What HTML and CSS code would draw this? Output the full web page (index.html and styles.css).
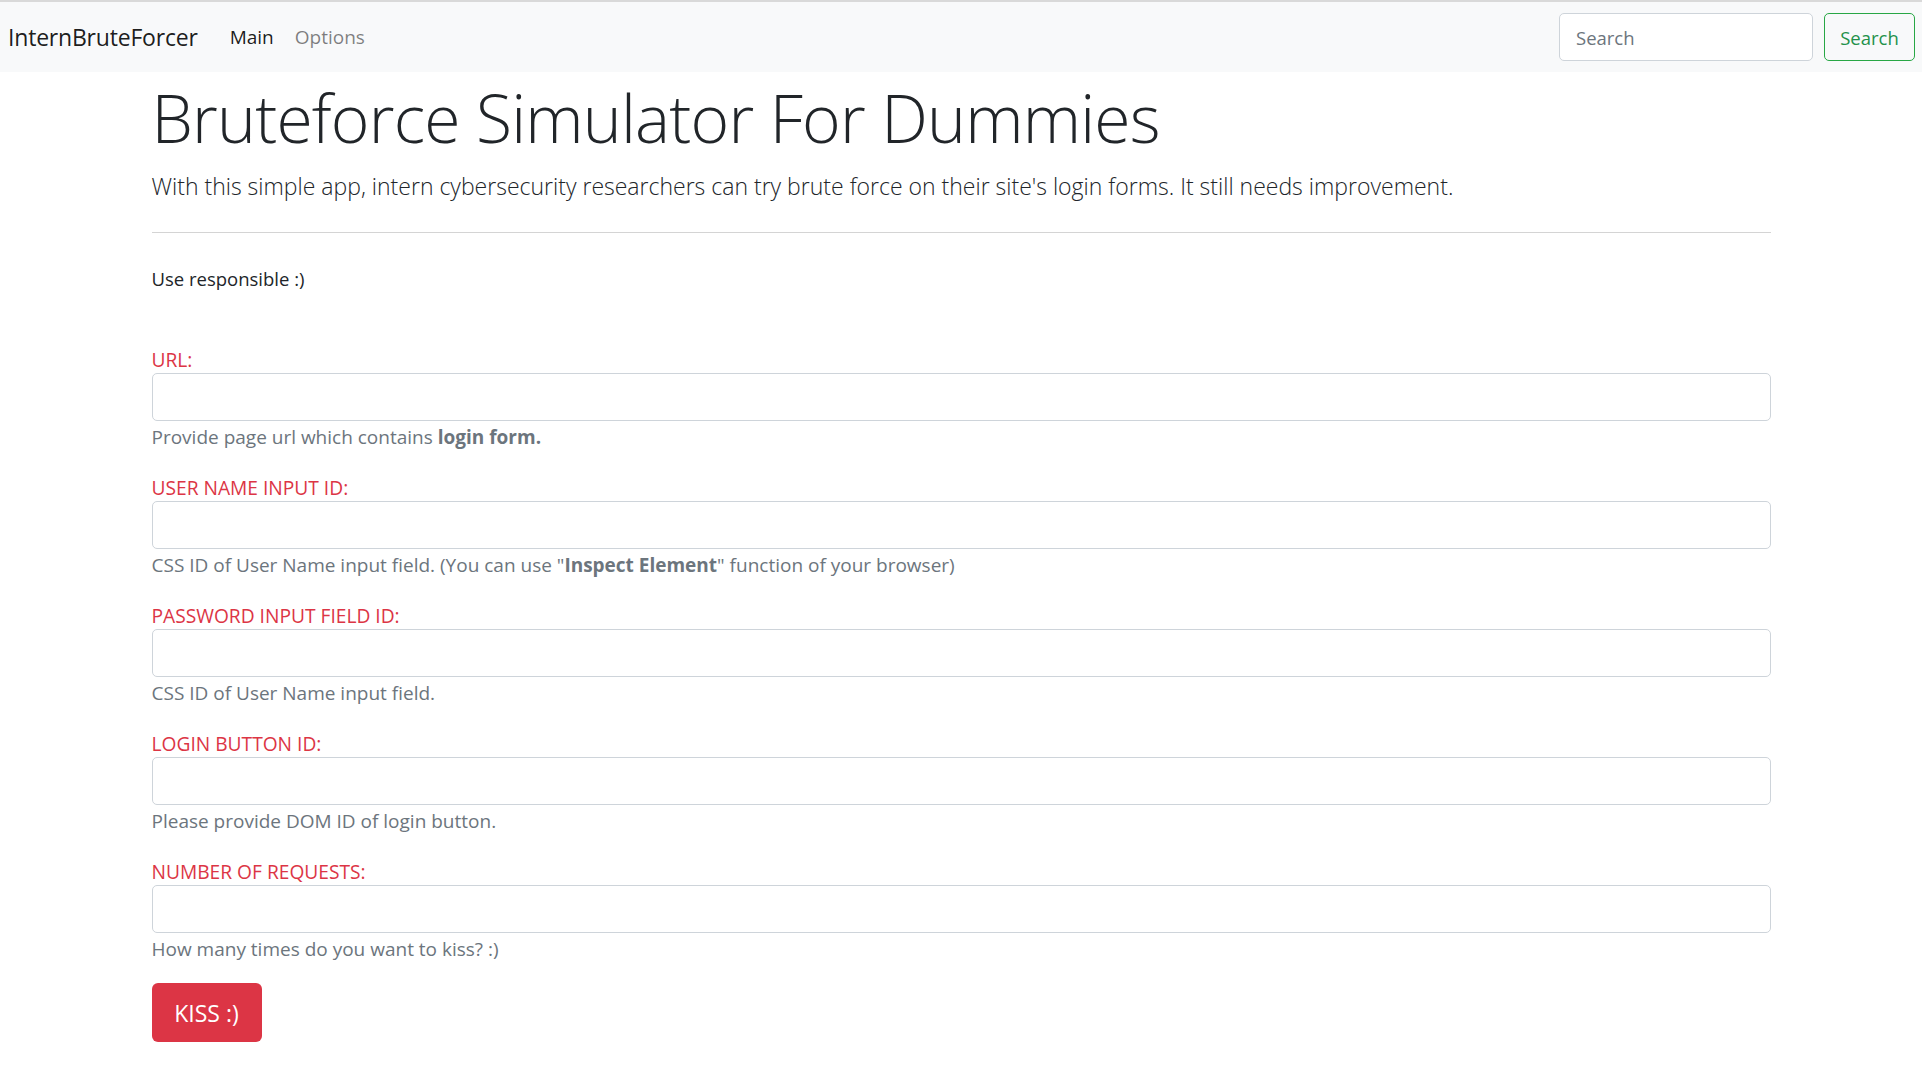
FILE: index.html
```html
<!DOCTYPE html>
<html lang="en">
<head>
<meta charset="utf-8">
<title>InternBruteForcer</title>
<link rel="stylesheet" href="styles.css">
</head>
<body>
<nav class="navbar">
  <a class="brand" href="#">InternBruteForcer</a>
  <div class="nav-links">
    <a class="nav-link active" href="#">Main</a>
    <a class="nav-link" href="#">Options</a>
  </div>
  <form class="search-form">
    <input class="search-input" type="search" placeholder="Search">
    <button class="search-btn" type="button">Search</button>
  </form>
</nav>

<main class="container">
  <h1 class="display">Bruteforce Simulator For Dummies</h1>
  <p class="lead">With this simple app, intern cybersecurity researchers can try brute force on their site's login forms. It still needs improvement.</p>
  <hr class="divider">
  <p class="note">Use responsible :)</p>

  <form class="bf-form">
    <div class="form-group">
      <label class="field-label">URL:</label>
      <input class="field-input" type="text">
      <small class="help">Provide page url which contains <b>login form.</b></small>
    </div>
    <div class="form-group">
      <label class="field-label">USER NAME INPUT ID:</label>
      <input class="field-input" type="text">
      <small class="help">CSS ID of User Name input field. (You can use "<b>Inspect Element</b>" function of your browser)</small>
    </div>
    <div class="form-group">
      <label class="field-label">PASSWORD INPUT FIELD ID:</label>
      <input class="field-input" type="text">
      <small class="help">CSS ID of User Name input field.</small>
    </div>
    <div class="form-group">
      <label class="field-label">LOGIN BUTTON ID:</label>
      <input class="field-input" type="text">
      <small class="help">Please provide DOM ID of login button.</small>
    </div>
    <div class="form-group">
      <label class="field-label">NUMBER OF REQUESTS:</label>
      <input class="field-input" type="text">
      <small class="help">How many times do you want to kiss? :)</small>
    </div>
    <button class="kiss-btn" type="button">KISS :)</button>
  </form>
</main>
</body>
</html>
```
FILE: styles.css
```css
* { box-sizing: border-box; }
html, body { margin: 0; padding: 0; }
body {
  font-family: "Open Sans", "Noto Sans", sans-serif;
  color: #212529;
  background: #fff;
}

/* Navbar */
.navbar {
  display: flex;
  align-items: center;
  height: 72px;
  padding: 0 7px 0 8px;
  background: #f8f9fa;
  border-top: 2px solid #d9d9d9;
}
.brand {
  font-size: 23px;
  color: rgba(0,0,0,.9);
  text-decoration: none;
  letter-spacing: -0.2px;
  margin-right: 32px;
}
.nav-links {
  display: flex;
  gap: 21px;
}
.nav-link {
  font-size: 19px;
  text-decoration: none;
  color: rgba(0,0,0,.5);
}
.nav-link.active { color: rgba(0,0,0,.9); }
.search-form {
  margin-left: auto;
  display: flex;
  gap: 11px;
}
.search-input {
  width: 254px;
  height: 48px;
  border: 1px solid #ced4da;
  border-radius: 5px;
  padding: 0 16px;
  font-family: inherit;
  font-size: 18.5px;
  color: #495057;
  background: #fff;
}
.search-input::placeholder { color: #6c757d; }
.search-btn {
  width: 91px;
  height: 48px;
  border: 1px solid #28a745;
  border-radius: 5px;
  background: transparent;
  color: #23914a;
  font-family: inherit;
  font-size: 18.5px;
  padding: 0;
}

/* Content */
.container {
  width: 1619px;
  margin: 0 auto;
}
.display {
  margin: 3px 0 0;
  font-size: 66px;
  font-weight: 300;
  line-height: 84px;
  letter-spacing: -0.8px;
  color: #212529;
}
.lead {
  margin: 10px 0 0;
  font-size: 23px;
  font-weight: 300;
  line-height: 34px;
  color: #212529;
}
.divider {
  margin: 29px 0 0;
  border: 0;
  border-top: 1px solid #d4d4d4;
  height: 0;
}
.note {
  margin: 31px 0 0;
  font-size: 18.5px;
  line-height: 30px;
}

.bf-form { margin-top: 49px; }
.form-group { margin-bottom: 22px; }
.field-label {
  display: block;
  padding-top: 4px;
  font-size: 19.2px;
  line-height: 26px;
  color: #dc3545;
}
.field-input {
  display: block;
  width: 100%;
  height: 48px;
  border: 1px solid #ced4da;
  border-radius: 5px;
  background: #fff;
  font-family: inherit;
  font-size: 18.5px;
  padding: 0 15px;
}
.help {
  display: block;
  margin-top: 4px;
  font-size: 19px;
  line-height: 24px;
  color: #6c757d;
}
.help b { font-weight: 700; }
.kiss-btn {
  display: block;
  width: 110px;
  height: 59px;
  border: 0;
  border-radius: 6px;
  background: #dc3545;
  color: #fff;
  font-family: inherit;
  font-size: 23px;
  padding: 0;
}
```
